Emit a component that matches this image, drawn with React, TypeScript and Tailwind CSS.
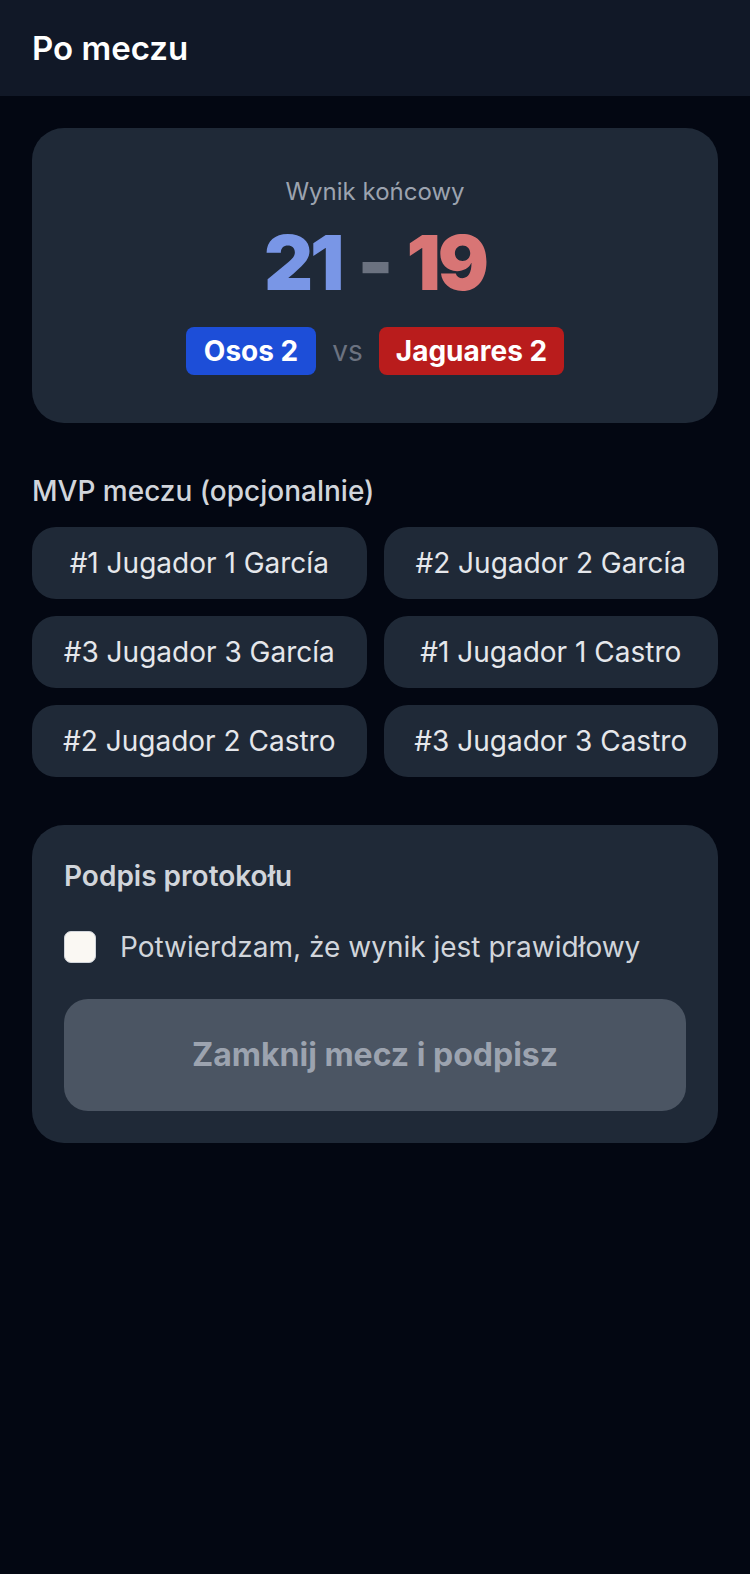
import React from "react";

const players = [
  "#1 Jugador 1 García",
  "#2 Jugador 2 García",
  "#3 Jugador 3 García",
  "#1 Jugador 1 Castro",
  "#2 Jugador 2 Castro",
  "#3 Jugador 3 Castro",
];

export default function App() {
  return (
    <div
      className="min-h-[1574px] w-full bg-[#030712] text-white"
      style={{ fontFamily: "Inter, 'Noto Sans', sans-serif" }}
    >
      <header className="flex h-[96px] items-center bg-[#111827] px-8">
        <h1 className="text-[33px] font-semibold leading-none text-white">Po meczu</h1>
      </header>

      <main className="px-8 pt-8">
        <section className="flex flex-col items-center rounded-[32px] bg-[#1f2937] py-12">
          <div className="text-[24px] leading-[32px] text-[#9ca3af]">Wynik końcowy</div>
          <div className="mt-4 flex items-center gap-4 text-[76px] font-black leading-none tracking-[-3px]">
            <span className="text-[#7996e6]">21</span>
            <span className="text-[#6b7280]">-</span>
            <span className="text-[#d87575]">19</span>
          </div>
          <div className="mt-[27px] flex items-center gap-4">
            <span className="flex h-[48px] items-center rounded-[8px] bg-[#1d4ed8] px-[18px] text-[28px] font-bold text-white">
              Osos 2
            </span>
            <span className="text-[28px] text-[#6b7280]">vs</span>
            <span className="flex h-[48px] items-center rounded-[8px] bg-[#b91c1c] px-[17px] text-[28px] font-bold text-white">
              Jaguares 2
            </span>
          </div>
        </section>

        <h2 className="mt-12 text-[28px] font-medium leading-[40px] text-[#d1d5db]">
          MVP meczu (opcjonalnie)
        </h2>
        <div className="mt-4 grid grid-cols-2 gap-[17px]">
          {players.map((p) => (
            <button
              key={p}
              className="flex h-[72px] items-center justify-center rounded-[24px] bg-[#1f2937] text-[28px] text-[#e5e7eb]"
            >
              {p}
            </button>
          ))}
        </div>

        <section className="mt-12 rounded-[32px] bg-[#1f2937] p-8">
          <h3 className="text-[28px] font-semibold leading-[38px] text-[#d1d5db]">Podpis protokołu</h3>
          <label className="mt-8 flex items-center gap-6">
            <span className="h-[32px] w-[32px] rounded-[7px] border border-[#d1d5db] bg-[#faf8f3]" />
            <span className="text-[28px] leading-[40px] text-[#d1d5db]">
              Potwierdzam, że wynik jest prawidłowy
            </span>
          </label>
          <button className="mt-8 flex h-[112px] w-full items-center justify-center rounded-[24px] bg-[#4b5563] text-[32px] font-bold text-[#9ca3af]">
            Zamknij mecz i podpisz
          </button>
        </section>
      </main>
    </div>
  );
}
